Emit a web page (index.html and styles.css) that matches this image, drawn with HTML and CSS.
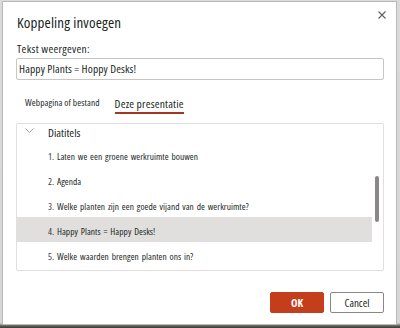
FILE: index.html
```html
<!DOCTYPE html>
<html lang="nl">
<head>
<meta charset="utf-8">
<title>Koppeling invoegen</title>
<link rel="stylesheet" href="styles.css">
</head>
<body>
<div class="backdrop">
  <div class="dialog">
    <button class="close" aria-label="Sluiten">
      <svg width="8" height="8" viewBox="0 0 8 8"><path d="M0.5 0.5L7.5 7.5M7.5 0.5L0.5 7.5" stroke="#605e5c" stroke-width="1.1" fill="none"/></svg>
    </button>
    <h1 class="title">Koppeling invoegen</h1>
    <label class="field-label">Tekst weergeven:</label>
    <div class="input">Happy Plants = Hoppy Desks!</div>
    <div class="tabs">
      <span class="tab tab-small">Webpagina of bestand</span>
      <span class="tab tab-active">Deze presentatie</span>
    </div>
    <div class="listbox">
      <div class="list-inner">
        <div class="group-row">
          <svg class="chev" width="9" height="5" viewBox="0 0 9 5"><path d="M0.5 0.5L4.5 4.5L8.5 0.5" stroke="#a19f9d" stroke-width="1" fill="none"/></svg>
          <span class="group-name">Diatitels</span>
        </div>
        <div class="item"><span class="num">1.</span> Laten we een groene werkruimte bouwen</div>
        <div class="item"><span class="num">2.</span> Agenda</div>
        <div class="item"><span class="num">3.</span> Welke planten zijn een goede vijand van de werkruimte?</div>
        <div class="item selected"><span class="num">4.</span> Happy Plants = Happy Desks!</div>
        <div class="item"><span class="num">5.</span> Welke waarden brengen planten ons in?</div>
      </div>
      <div class="scrollbar"><div class="thumb"></div></div>
    </div>
    <div class="footer">
      <button class="btn btn-primary">OK</button>
      <button class="btn btn-default">Cancel</button>
    </div>
  </div>
</div>
</body>
</html>
```
FILE: styles.css
```css
* { box-sizing: border-box; }
html, body {
  margin: 0;
  padding: 0;
  width: 400px;
  height: 328px;
  overflow: hidden;
}
body {
  background: #d4d4d4;
  font-family: "Open Sans", "Liberation Sans", sans-serif;
  font-stretch: 81%;
  color: #201f1e;
}
.backdrop {
  width: 400px;
  height: 328px;
  padding: 1px 0 0 2px;
  background: linear-gradient(to bottom, #dadada 0, #d6d6d6 323px, #5a5a52 326px, #3e3e38 328px);
}
.dialog {
  position: relative;
  width: 395px;
  height: 324px;
  background: #ffffff;
  border: 1px solid #b9b9b9;
  padding: 0 12px 0 13px;
  display: flex;
  flex-direction: column;
}
.close {
  position: absolute;
  top: 7px;
  right: 8px;
  width: 12px;
  height: 12px;
  padding: 0;
  border: 0;
  background: none;
  display: flex;
  align-items: center;
  justify-content: center;
}
.title {
  margin: 10px 0 0 1px;
  font-size: 15px;
  letter-spacing: 0.15px;
  font-weight: 400;
  line-height: 20px;
  color: #201f1e;
}
.field-label {
  margin: 9px 0 0 1px;
  font-size: 11.5px;
  letter-spacing: 0.3px;
  line-height: 15px;
  color: #201f1e;
}
.input {
  margin-top: 2px;
  height: 22px;
  border: 1px solid #c8c6c4;
  border-radius: 2px;
  padding: 0 2px;
  font-size: 11.4px;
  letter-spacing: 0.15px;
  line-height: 20px;
  color: #201f1e;
}
.tabs {
  margin-top: 14px;
  height: 20px;
  display: flex;
  align-items: flex-start;
  padding-left: 9px;
}
.tab {
  display: block;
  color: #201f1e;
}
.tab-small {
  font-size: 9.4px;
  letter-spacing: 0.1px;
  line-height: 14px;
  padding-top: 2px;
}
.tab-active {
  margin-left: 15px;
  font-size: 11.5px;
  letter-spacing: 0.2px;
  line-height: 16px;
  padding-top: 2px;
  height: 20px;
  border-bottom: 2px solid #a4371f;
}
.listbox {
  margin-top: 9px;
  height: 148px;
  border: 1px solid #e1dfdd;
  border-radius: 2px;
  position: relative;
  display: flex;
  flex-shrink: 0;
}
.list-inner {
  flex: 1;
  overflow: hidden;
  margin-right: 11px;
}
.group-row {
  height: 18px;
  display: flex;
  align-items: center;
  position: relative;
}
.chev {
  margin-left: 8px;
  margin-top: -5px;
}
.group-name {
  margin-left: 14px;
  font-size: 11.6px;
  line-height: 16px;
}
.item {
  height: 25px;
  padding-left: 31px;
  padding-top: 3px;
  display: flex;
  align-items: center;
  font-size: 9.4px;
  letter-spacing: 0.05px;
  word-spacing: 1px;
  white-space: pre;
  color: #201f1e;
}
.num { color: #3b3a39; }
.item.selected { background: #e1dfdd; }
.scrollbar {
  position: absolute;
  right: 3px;
  top: 52px;
  width: 5px;
  height: 46px;
}
.thumb {
  width: 4px;
  height: 100%;
  border-radius: 2px;
  background: #8a8886;
}
.footer {
  margin-top: 21px;
  display: flex;
  justify-content: flex-end;
  gap: 6px;
}
.btn {
  height: 21px;
  width: 54px;
  border-radius: 2px;
  font-family: "Open Sans", "Liberation Sans", sans-serif;
  font-stretch: 81%;
  font-size: 11px;
  padding: 0;
}
.btn-primary {
  background: #c43e1c;
  border: 1px solid #c43e1c;
  color: #ffffff;
  font-weight: 700;
}
.btn-default {
  background: #ffffff;
  border: 1px solid #8a8886;
  color: #201f1e;
}
```
